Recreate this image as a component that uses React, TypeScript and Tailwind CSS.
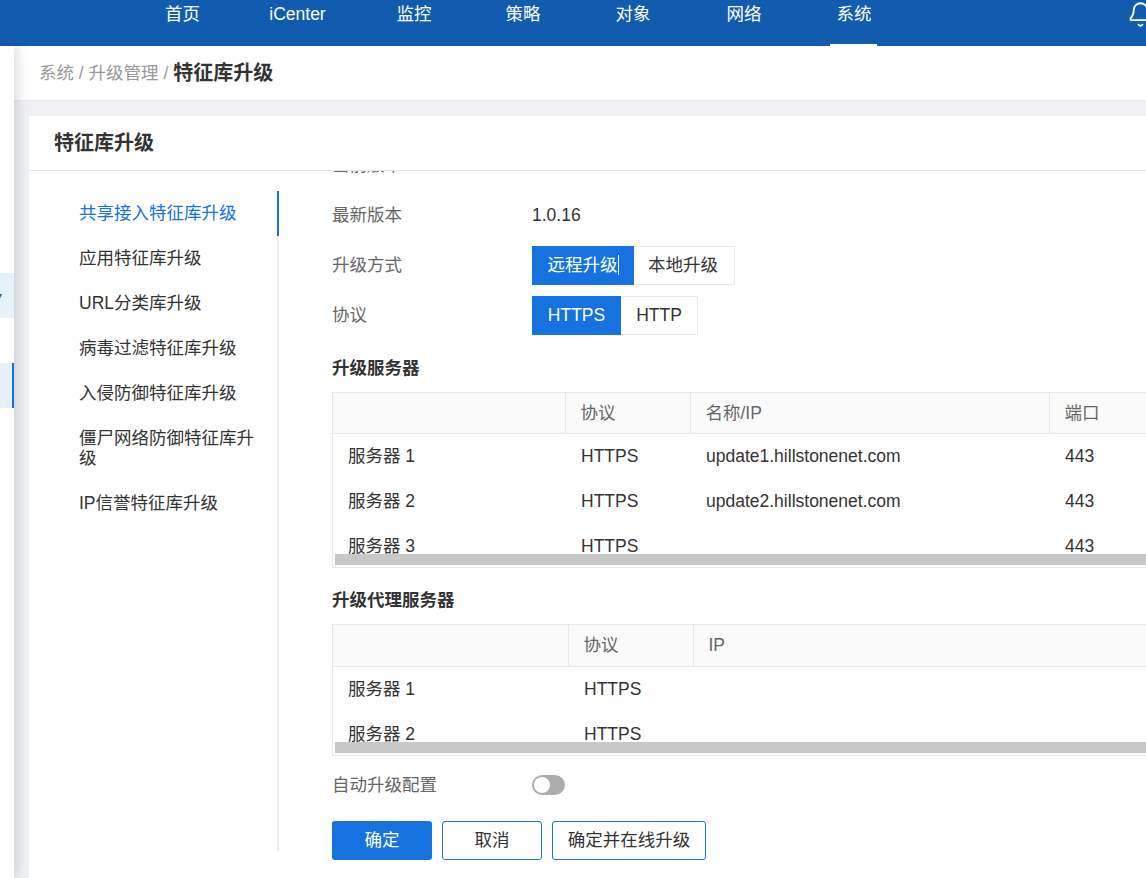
import { Bell } from "lucide-react";

const navItems = ["首页", "iCenter", "监控", "策略", "对象", "网络", "系统"];
const navWidths = ["w-[105px]", "w-[125px]", "w-[108px]", "w-[110px]", "w-[110px]", "w-[112px]", "w-[108px]"];

const sideItems = [
  "共享接入特征库升级",
  "应用特征库升级",
  "URL分类库升级",
  "病毒过滤特征库升级",
  "入侵防御特征库升级",
  "僵尸网络防御特征库升级",
  "IP信誉特征库升级",
];

type Column = { title: string; width: string };

const ServerTable = ({
  columns,
  rows,
  height,
  headHeight,
}: {
  columns: Column[];
  rows: string[][];
  height: string;
  headHeight: string;
}) => (
  <div className="w-[900px] border border-[#e8e8e8] pb-[2px]">
    <div className={`${height} overflow-hidden`}>
      <table className="w-[900px] table-fixed">
        <thead>
          <tr className={`${headHeight} bg-[#fafafa] border-b border-[#e8e8e8]`}>
            {columns.map((col, i) => (
              <th
                key={i}
                className={`${col.width} border-r border-[#e8e8e8] px-[15px] text-left font-normal leading-[26px] text-[#666]`}
              >
                {col.title}
              </th>
            ))}
          </tr>
        </thead>
        <tbody>
          {rows.map((row, i) => (
            <tr key={i} className="h-[45px] text-[#333]">
              {row.map((cell, j) => (
                <td key={j} className={`pr-[15px] leading-[26px] ${j === 0 ? "pl-[15px]" : "pl-[16px]"}`}>
                  {cell}
                </td>
              ))}
            </tr>
          ))}
        </tbody>
      </table>
    </div>
    <div className="ml-[2px] h-[11px] bg-[#c8c8c8]" />
  </div>
);

const App = () => {
  return (
    <div className="flex h-[878px] w-[1146px] flex-col overflow-hidden bg-white font-['Liberation_Sans','Noto_Sans_CJK_SC',sans-serif] text-[17.5px] text-[#333]">
      <header className="flex h-[46px] shrink-0 bg-[#125cb0] pl-[130px] text-white">
        {navItems.map((item, i) => (
          <a
            key={item}
            href="#"
            className={`${navWidths[i]} flex h-[46px] shrink-0 justify-center pt-[1px] leading-[26px] ${
              item === "系统" ? "relative" : ""
            }`}
          >
            {item}
            {item === "系统" && (
              <span className="absolute bottom-0 left-[30px] h-[2px] w-[47px] bg-white" />
            )}
          </a>
        ))}
        <Bell className="ml-[219px] mt-[1px] h-[27px] w-[27px] shrink-0" strokeWidth={1.6} />
      </header>

      <div className="flex min-h-0 flex-1">
        <aside className="relative z-10 flex w-[14px] shrink-0 flex-col bg-white pt-[227px] shadow-[0_0_16px_rgba(0,0,0,0.22)]">
          <div className="flex h-[45px] items-center overflow-hidden bg-[#e6f1fc] text-[10px] leading-none text-[#555]">
            <span className="-ml-[3px]">▾</span>
          </div>
          <div className="mt-[45px] h-[45px] border-r-2 border-[#1672de] bg-[#e6f1fc]" />
        </aside>

        <main className="flex min-w-0 flex-1 flex-col">
          <div className="flex h-[55px] shrink-0 items-center border-b border-[#e6e6e6] pl-[25px]">
            <span className="text-[#999]">系统 / 升级管理 / </span>
            <span className="ml-[5px] text-[20px] font-bold text-[#333]">特征库升级</span>
          </div>

          <div className="min-h-0 flex-1 bg-[#f0f1f4] pl-[15px] pt-[15px]">
            <section className="relative z-20 flex h-[800px] w-[1200px] flex-col bg-white">
              <div className="flex h-[55px] shrink-0 items-center border-b border-[#e6e6e6] pl-[25px] text-[20px] font-bold">
                特征库升级
              </div>

              <div className="flex min-h-0 flex-1">
                <nav className="mt-[20px] h-[660px] w-[250px] shrink-0 border-r-2 border-[#eeeeee]">
                  {sideItems.map((item, i) => (
                    <a
                      key={item}
                      href="#"
                      className={`-mr-[2px] flex items-center pb-[2px] pl-[50px] pr-[22px] leading-[20px] ${
                        i === 5 ? "h-[65px]" : "h-[45px]"
                      } ${i === 0 ? "border-r-2 border-[#1672de] text-[#1672de]" : ""}`}
                    >
                      {item}
                    </a>
                  ))}
                </nav>

                <div className="min-w-0 flex-1 overflow-hidden pl-[53px]">
                  <div className="-mt-[31px]">
                    <div className="flex h-[50px] items-center text-[#666]">当前版本</div>
                    <div className="flex h-[50px] items-center">
                      <span className="w-[200px] text-[#666]">最新版本</span>
                      <span>1.0.16</span>
                    </div>
                    <div className="flex h-[50px] items-center">
                      <span className="w-[200px] text-[#666]">升级方式</span>
                      <div className="flex h-[39px]">
                        <span className="flex w-[102px] items-center justify-center bg-[#1672de] text-white">
                          <span className="border-r border-white leading-[20px]">远程升级</span>
                        </span>
                        <span className="flex w-[101px] items-center justify-center border border-l-0 border-[#e8e8e8] pr-[2px]">
                          本地升级
                        </span>
                      </div>
                    </div>
                    <div className="flex h-[50px] items-center">
                      <span className="w-[200px] text-[#666]">协议</span>
                      <div className="flex h-[39px]">
                        <span className="flex w-[89px] items-center justify-center bg-[#1672de] text-white">
                          HTTPS
                        </span>
                        <span className="flex w-[77px] items-center justify-center border border-l-0 border-[#e8e8e8]">
                          HTTP
                        </span>
                      </div>
                    </div>

                    <h3 className="mb-[12px] mt-[16px] text-[17.5px] font-bold leading-[24px]">升级服务器</h3>
                    <ServerTable
                      height="h-[161px]"
                      headHeight="h-[40px]"
                      columns={[
                        { title: "", width: "w-[232px]" },
                        { title: "协议", width: "w-[125px]" },
                        { title: "名称/IP", width: "w-[359px]" },
                        { title: "端口", width: "w-auto" },
                      ]}
                      rows={[
                        ["服务器 1", "HTTPS", "update1.hillstonenet.com", "443"],
                        ["服务器 2", "HTTPS", "update2.hillstonenet.com", "443"],
                        ["服务器 3", "HTTPS", "", "443"],
                      ]}
                    />

                    <h3 className="mb-[12px] mt-[20px] text-[17.5px] font-bold leading-[24px]">升级代理服务器</h3>
                    <ServerTable
                      height="h-[117px]"
                      headHeight="h-[41px]"
                      columns={[
                        { title: "", width: "w-[235px]" },
                        { title: "协议", width: "w-[125px]" },
                        { title: "IP", width: "w-auto" },
                      ]}
                      rows={[
                        ["服务器 1", "HTTPS", ""],
                        ["服务器 2", "HTTPS", ""],
                      ]}
                    />

                    <div className="mt-[11px] flex h-[36px] items-center">
                      <span className="w-[200px] text-[#666]">自动升级配置</span>
                      <span className="flex h-[20px] w-[33px] items-center rounded-full bg-[#adadad] pl-[2px]">
                        <span className="h-[16px] w-[16px] rounded-full bg-white" />
                      </span>
                    </div>

                    <div className="mt-[18px] flex gap-[10px]">
                      <button className="h-[39px] w-[100px] rounded-[3px] bg-[#1672de] text-white">确定</button>
                      <button className="h-[39px] w-[100px] rounded-[3px] border border-[#1672de]">取消</button>
                      <button className="h-[39px] w-[154px] rounded-[3px] border border-[#1672de]">确定并在线升级</button>
                    </div>
                  </div>
                </div>
              </div>
            </section>
          </div>
        </main>
      </div>
    </div>
  );
};

export default App;
